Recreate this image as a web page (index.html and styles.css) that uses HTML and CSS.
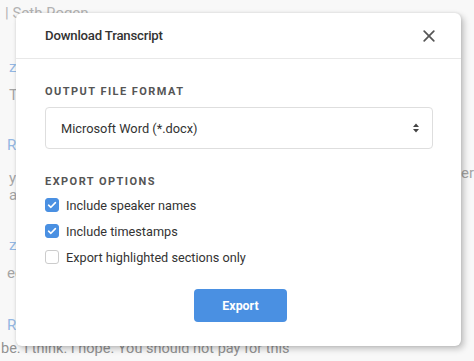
FILE: index.html
```html
<!DOCTYPE html>
<html>
<head>
<meta charset="utf-8">
<link rel="stylesheet" href="styles.css">
</head>
<body>
<div class="page">
  <div class="line top">| Seth Rogen</div>
  <div class="line name l1">z</div>
  <div class="line txt l2">T</div>
  <div class="line name l3">Ro</div>
  <div class="line txt l4">y</div>
  <div class="line txt l5">a</div>
  <div class="line name l6">z</div>
  <div class="line txt l7">ee</div>
  <div class="line name l8">Ro</div>
  <div class="line txt l9">be. I think. I hope. You should not pay for this</div>
  <div class="right">er</div>
</div>
<div class="overlay"></div>
<div class="modal">
  <div class="modal-header">
    <h2 class="title">Download Transcript</h2>
    <svg class="close" width="12" height="12" viewBox="0 0 12 12"><path d="M1.2 1.2L10.8 10.8M10.8 1.2L1.2 10.8" stroke="#555" stroke-width="1.7" stroke-linecap="round"/></svg>
  </div>
  <div class="modal-body">
    <div class="label">Output File Format</div>
    <div class="select">
      <span>Microsoft Word (*.docx)</span>
      <svg width="8" height="12" viewBox="0 0 8 12"><path d="M4 1.5L7 5H1Z M4 10.5L1 7H7Z" fill="#444"/></svg>
    </div>
    <div class="label second">Export Options</div>
    <div class="options">
      <div class="opt"><span class="cb on"><svg width="10" height="8" viewBox="0 0 10 8"><path d="M1.6 4.2L3.9 6.3L8.4 1.6" fill="none" stroke="#fff" stroke-width="1.6" stroke-linecap="round" stroke-linejoin="round"/></svg></span>Include speaker names</div>
      <div class="opt"><span class="cb on"><svg width="10" height="8" viewBox="0 0 10 8"><path d="M1.6 4.2L3.9 6.3L8.4 1.6" fill="none" stroke="#fff" stroke-width="1.6" stroke-linecap="round" stroke-linejoin="round"/></svg></span>Include timestamps</div>
      <div class="opt"><span class="cb"></span>Export highlighted sections only</div>
    </div>
    <div class="actions"><button class="btn">Export</button></div>
  </div>
</div>
</body>
</html>
```
FILE: styles.css
```css
html, body { margin: 0; padding: 0; }
body {
  width: 474px; height: 361px; overflow: hidden; position: relative;
  background: #f7f7f7;
  font-family: Roboto, "Liberation Sans", sans-serif;
}
.page { position: relative; height: 361px; font-size: 15px; color: #8f8f8f; }
.line { position: absolute; white-space: nowrap; line-height: 18px; }
.name { color: #7aa6dc; }
.top { left: 5px; top: 4px; color: #a0a0a0; }
.l1 { left: 9px; top: 58px; }
.l2 { left: 9px; top: 86px; }
.l3 { left: 7px; top: 136px; }
.l4 { left: 9px; top: 169px; }
.l5 { left: 9px; top: 186px; }
.l6 { left: 9px; top: 236px; }
.l7 { left: 7px; top: 264px; }
.l8 { left: 7px; top: 316px; }
.l9 { left: 1px; top: 340px; font-size: 14.5px; color: #777; }
.right { position: absolute; left: 461px; top: 164px; }
.overlay { position: absolute; inset: 0; background: rgba(255,255,255,0.2); }
.modal {
  position: absolute; left: 16px; top: 13px; width: 445px; height: 333px;
  background: #fff; border-radius: 6px;
  box-shadow: 0 0 3px rgba(0,0,0,0.12), 3px 3px 6px rgba(0,0,0,0.22);
  display: flex; flex-direction: column;
}
.modal-header {
  height: 46px; border-bottom: 1px solid #e8e8e8;
  display: flex; align-items: center; justify-content: space-between;
  padding: 0 26px 0 29px;
}
.title { margin: 0; font-size: 13.2px; font-weight: 500; letter-spacing: -0.2px; color: #333; }
.close { display: block; }
.modal-body { padding: 26px 28px 24px 29px; display: flex; flex-direction: column; }
.label {
  font-size: 11px; font-weight: 700; letter-spacing: 1.45px; text-transform: uppercase;
  color: #555; line-height: 13px;
}
.second { margin-top: 26px; }
.select {
  margin-top: 9px; height: 40px; border: 1px solid #dedede; border-radius: 4px;
  display: flex; align-items: center; justify-content: space-between;
  padding: 0 12px 0 15px; font-size: 12.8px; color: #333;
}
.options { margin-top: 4px; display: flex; flex-direction: column; }
.opt { height: 26px; display: flex; align-items: center; font-size: 12.7px; color: #333; }
.cb {
  width: 12px; height: 12px; border: 1px solid #ccc; border-radius: 3px; margin-right: 7px;
  display: flex; align-items: center; justify-content: center; background: #fff;
}
.cb.on { background: #4a90e2; border-color: #4a90e2; }
.actions { margin-top: 19px; display: flex; justify-content: center; }
.btn {
  width: 93px; height: 33px; border: 0; border-radius: 4px; background: #4a90e2;
  color: #fff; font-family: Roboto, "Liberation Sans", sans-serif; font-size: 12.4px; font-weight: 700;
  margin-left: 3px;
}
```
